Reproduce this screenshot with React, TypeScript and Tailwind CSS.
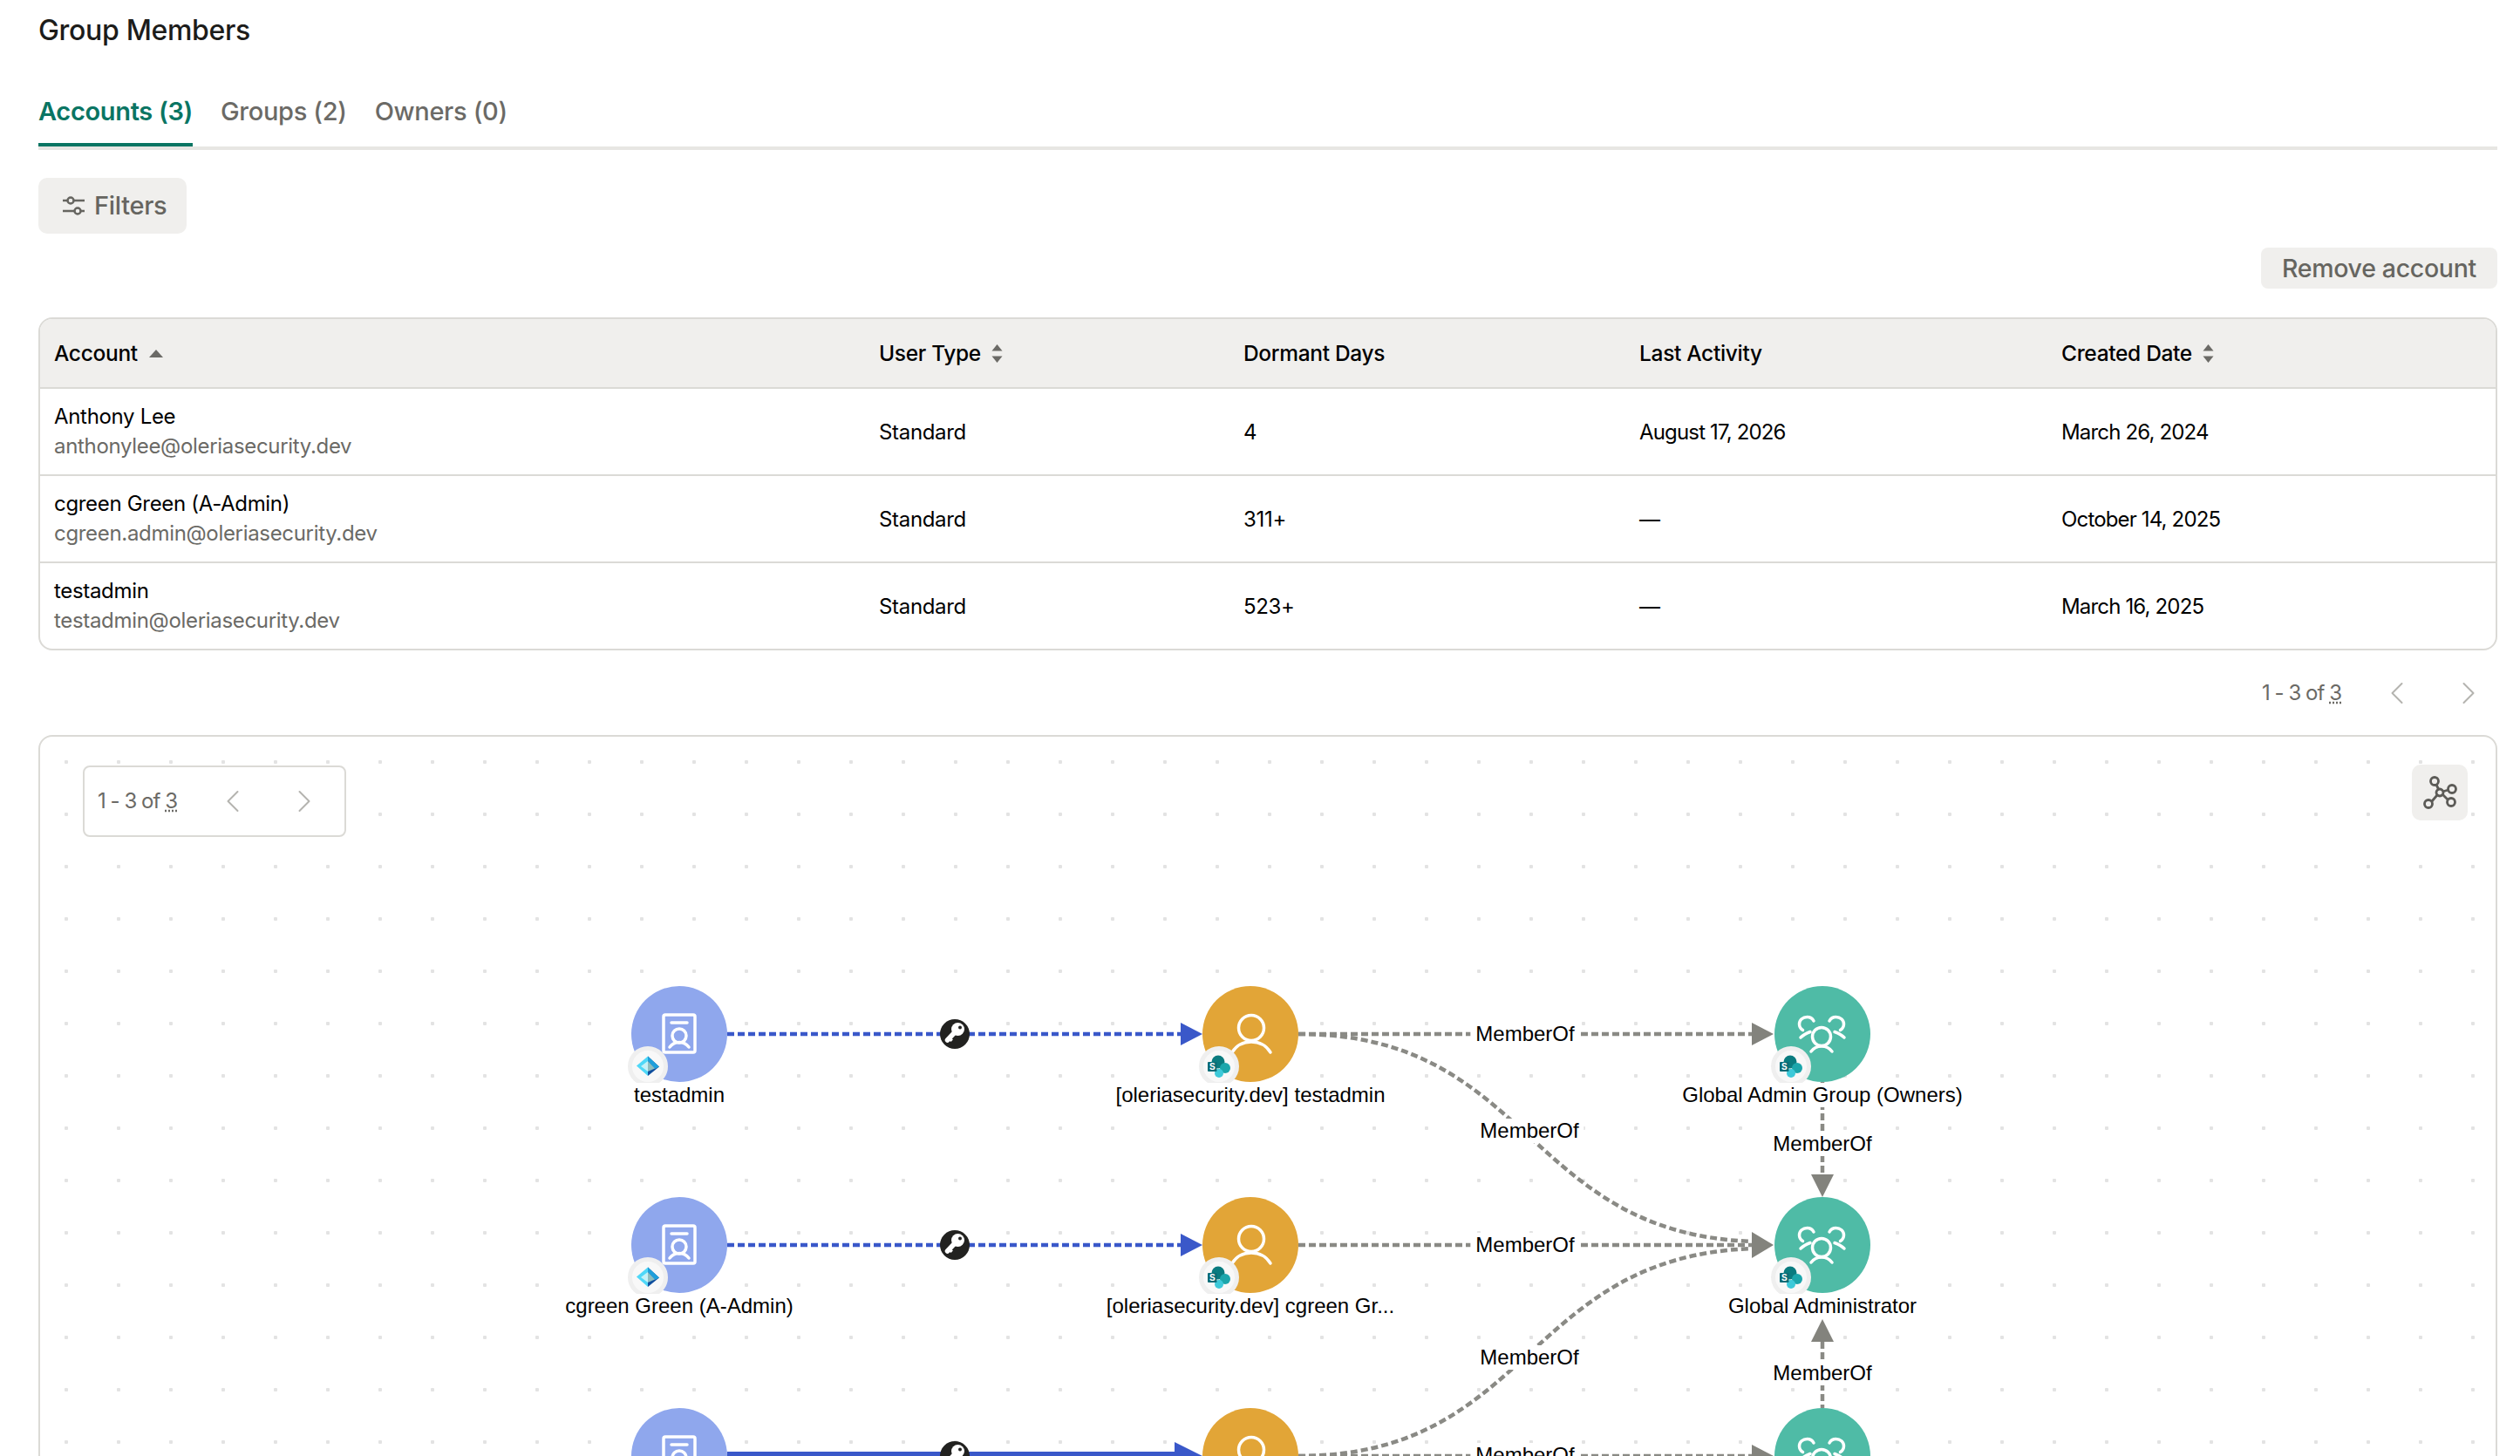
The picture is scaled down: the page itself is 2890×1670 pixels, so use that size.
import { ChevronLeft, ChevronRight } from 'lucide-react';

const columns = 'grid grid-cols-[946px_418px_454px_484px_1fr] items-center pl-[16px]';

const rows = [
  { name: 'Anthony Lee', email: 'anthonylee@oleriasecurity.dev', type: 'Standard', dormant: '4', activity: 'August 17, 2026', created: 'March 26, 2024' },
  { name: 'cgreen Green (A-Admin)', email: 'cgreen.admin@oleriasecurity.dev', type: 'Standard', dormant: '311+', activity: '—', created: 'October 14, 2025' },
  { name: 'testadmin', email: 'testadmin@oleriasecurity.dev', type: 'Standard', dormant: '523+', activity: '—', created: 'March 16, 2025' },
];

type NodeKind = 'account' | 'user' | 'group';

const nodes: { kind: NodeKind; x: number; y: number; label: string }[] = [
  { kind: 'account', x: 779, y: 1186, label: 'testadmin' },
  { kind: 'user', x: 1434, y: 1186, label: '[oleriasecurity.dev] testadmin' },
  { kind: 'group', x: 2090, y: 1186, label: 'Global Admin Group (Owners)' },
  { kind: 'account', x: 779, y: 1428, label: 'cgreen Green (A-Admin)' },
  { kind: 'user', x: 1434, y: 1428, label: '[oleriasecurity.dev] cgreen Gr...' },
  { kind: 'group', x: 2090, y: 1428, label: 'Global Administrator' },
  { kind: 'account', x: 779, y: 1670, label: '' },
  { kind: 'user', x: 1434, y: 1670, label: '' },
  { kind: 'group', x: 2090, y: 1670, label: '' },
];

const edgeLabels = [
  { x: 1749, y: 1186 },
  { x: 1754, y: 1297 },
  { x: 1749, y: 1428 },
  { x: 1754, y: 1557 },
  { x: 1749, y: 1669 },
  { x: 2090, y: 1312 },
  { x: 2090, y: 1575 },
];

// canvas origin, graph coords below are page coords
const ox = 46;
const oy = 845;

function SortIcon({ dir }: { dir: 'asc' | 'both' }) {
  if (dir === 'asc') {
    return (
      <svg width="16" height="9" viewBox="0 0 16 9" className="ml-[13px] text-[#6b6a66]" fill="currentColor">
        <path d="M8 0l8 9H0z" />
      </svg>
    );
  }
  return (
    <svg width="13" height="21" viewBox="0 0 13 21" className="ml-[12px] text-[#6b6a66]" fill="currentColor">
      <path d="M6.500 0l6 7.500H.5z" />
      <path d="M6.500 21l-6-7.500h12z" />
    </svg>
  );
}

function Pager() {
  return (
    <div className="flex items-center text-[24px] tracking-[-0.04em] text-[#6b6a66]">
      <span className="w-[133px]">
        1 - 3 of <span className="underline decoration-dotted">3</span>
      </span>
      <ChevronLeft size={44} strokeWidth={1.1} className="text-[#b4b3af]" />
      <ChevronRight size={44} strokeWidth={1.1} className="ml-[38px] text-[#b4b3af]" />
    </div>
  );
}

function NodeIcon({ kind }: { kind: NodeKind }) {
  if (kind === 'account') {
    return (
      <svg width="110" height="110" viewBox="0 0 110 110" fill="none" stroke="white" strokeWidth="3.5" strokeLinecap="round" strokeLinejoin="round">
        <rect x="37" y="33" width="36" height="43" rx="2" />
        <path d="M46 42h18" />
        <circle cx="55" cy="57" r="8" />
        <path d="M44 70c3-4 7-5.500 11-5.500s8 1.500 11 5.500" />
      </svg>
    );
  }
  if (kind === 'user') {
    return (
      <svg width="110" height="110" viewBox="0 0 110 110" fill="none" stroke="white" strokeWidth="3.5" strokeLinecap="round">
        <circle cx="56" cy="48" r="14.500" />
        <path d="M34 76c5-8 13-12 22-12s17 4 22 12" />
      </svg>
    );
  }
  return (
    <svg width="110" height="110" viewBox="0 0 110 110" fill="none" stroke="white" strokeWidth="3.500" strokeLinecap="round">
      <circle cx="54" cy="58" r="10.500" />
      <path d="M42 75c3-4 7-6 12-6s9 2 12 6" />
      <path d="M45 40c-1.500-3-4.500-4.500-7.500-4.500-5 0-9 3.500-9 8 0 3 1.500 5.500 4 7" />
      <path d="M30 59c3-3 7-5 11-6.500" />
      <path d="M63 40c1.500-3 4.500-4.500 7.500-4.500 5 0 9 3.500 9 8 0 3-1.500 5.500-4 7" />
      <path d="M80 59c-3-3-7-5-11-6.500" />
    </svg>
  );
}

function EntraLogo() {
  return (
    <svg width="28" height="24" viewBox="0 0 28 24">
      <path d="M14 .5L1 11.500L14 23z" fill="#4fd8f8" />
      <path d="M14 .5L27 12.500L14 23z" fill="#104f9e" />
      <path d="M14 .5L27 12.500L22 15L14 6z" fill="#1e9fdb" />
      <path d="M14 6L6 12L14 18z" fill="#c5f1f7" />
      <path d="M14 6L22 14.500L14 18z" fill="#8dbdbf" />
    </svg>
  );
}

function SharePointLogo() {
  return (
    <svg width="34" height="32" viewBox="0 0 34 32">
      <circle cx="16" cy="11" r="7.500" fill="#0a7b7f" />
      <circle cx="24" cy="18" r="6" fill="#1ca6ab" />
      <circle cx="17" cy="24" r="5" fill="#3dc9d9" />
      <rect x="4" y="11" width="10.500" height="11" rx="1" fill="#0a6c77" />
      <text x="9.200" y="20" textAnchor="middle" fontSize="10" fontWeight="700" fill="white" fontFamily="Liberation Sans, sans-serif">
        S
      </text>
    </svg>
  );
}

function GraphNode({ kind, x, y, label }: { kind: NodeKind; x: number; y: number; label: string }) {
  const fill = kind === 'account' ? 'bg-[#8fa7ed]' : kind === 'user' ? 'bg-[#e2a537]' : 'bg-[#4fbba6]';
  return (
    <div className="absolute h-[110px] w-[110px]" style={{ left: x - 55 - ox, top: y - 55 - oy }}>
      <div className={`h-[110px] w-[110px] rounded-full ${fill}`}>
        <NodeIcon kind={kind} />
      </div>
      <div className="absolute left-[-4px] top-[69px] flex h-[46px] w-[46px] items-center justify-center rounded-full border-[5px] border-[#efefef] bg-[#f8f8f8]">
        {kind === 'account' ? <EntraLogo /> : <SharePointLogo />}
      </div>
      {label && (
        <div className="absolute left-1/2 top-[111px] h-[28px] -translate-x-1/2 whitespace-nowrap bg-white text-[24px] leading-[28px] tracking-normal text-black font-['Liberation_Sans',Arial,sans-serif]">
          {label}
        </div>
      )}
    </div>
  );
}

function KeyNode({ y }: { y: number }) {
  return (
    <svg x={1095 - 17} y={y - 17} width="34" height="34" viewBox="0 0 34 34">
      <circle cx="17" cy="17" r="17" fill="#222220" />
      <circle cx="20.500" cy="11.500" r="7.500" fill="white" />
      <path d="M16.500 15.500L8.500 24" stroke="white" strokeWidth="5.500" strokeLinecap="round" />
      <path d="M11 24.500L13.500 22" stroke="white" strokeWidth="4" />
      <circle cx="23" cy="9.500" r="2" fill="#222220" />
    </svg>
  );
}

function GraphEdges() {
  const gray = '#8a8a85';
  const dash = { stroke: gray, strokeWidth: 4.5, strokeDasharray: '8 4', fill: 'none' };
  return (
    <svg className="absolute left-0 top-0" width="2816" height="825" viewBox="46 845 2816 825">
      <path d="M834 1186H1354" stroke="#3a58c9" strokeWidth="4.500" strokeDasharray="8 4" />
      <path d="M834 1428H1354" stroke="#3a58c9" strokeWidth="4.500" strokeDasharray="8 4" />
      <path d="M834 1670H1350" stroke="#3a58c9" strokeWidth="10" />
      <path d="M1354 1173L1379 1186L1354 1199Z" fill="#3a58c9" />
      <path d="M1354 1415L1379 1428L1354 1441Z" fill="#3a58c9" />
      <path d="M1347 1654L1379 1670L1347 1686Z" fill="#3a58c9" />
      <KeyNode y={1186} />
      <KeyNode y={1428} />
      <KeyNode y={1670} />

      <path d="M1489 1186H2009" {...dash} />
      <path d="M1489 1428H2009" {...dash} />
      <path d="M1489 1670H2009" {...dash} />
      <path d="M1489 1186C1756 1186 1748 1414 2009 1424" {...dash} />
      <path d="M1489 1670C1756 1670 1748 1442 2009 1432" {...dash} />
      <path d="M2090 1241V1347" {...dash} />
      <path d="M2090 1539V1615" {...dash} />

      <path d="M2009 1173L2034 1186L2009 1199Z" fill="#83837d" />
      <path d="M2009 1657L2034 1670L2009 1683Z" fill="#83837d" />
      <path d="M2009 1413L2034 1428L2009 1443Z" fill="#83837d" />
      <path d="M2077 1347H2103L2090 1373Z" fill="#83837d" />
      <path d="M2077 1539H2103L2090 1513Z" fill="#83837d" />
    </svg>
  );
}

export default function App() {
  return (
    <div className="h-[1670px] overflow-hidden bg-white pl-[44px] pr-[26px] text-[#1c1c1a] font-['Inter','Liberation_Sans',sans-serif] tracking-[-0.02em]">
      <h1 className="flex h-[72px] items-center pb-[2px] text-[32px] font-medium">Group Members</h1>

      <div className="flex h-[100px] gap-[32px] border-b-4 border-[#e7e6e3]">
        <button className="flex h-[96px] w-[177px] items-center whitespace-nowrap border-b-4 border-[#0a7563] pt-[20px] text-[29px] font-semibold text-[#0a7563]">
          Accounts (3)
        </button>
        <button className="flex h-[96px] items-center whitespace-nowrap pt-[16px] text-[29px] font-medium text-[#6b6a66]">
          Groups (2)
        </button>
        <button className="flex h-[96px] items-center whitespace-nowrap pt-[16px] text-[29px] font-medium text-[#6b6a66]">
          Owners (0)
        </button>
      </div>

      <button className="mt-[32px] flex h-[64px] w-[170px] items-center gap-[11px] rounded-[10px] bg-[#f0efed] pl-[28px] text-[29px] font-medium text-[#666560]">
        <svg width="25" height="22" viewBox="0 0 25 22" fill="none" stroke="currentColor" strokeWidth="2.500">
          <path d="M0 5h5M13 5h12M0 17h13M21 17h4" />
          <circle cx="9" cy="5" r="3.500" />
          <circle cx="17" cy="17" r="3.500" />
        </svg>
        Filters
      </button>

      <div className="mt-[16px] flex justify-end">
        <button className="flex h-[47px] w-[271px] items-center justify-center rounded-[8px] bg-[#f0efed] pt-[2px] text-[28.500px] font-medium text-[#666560]">
          Remove account
        </button>
      </div>

      <div className="mt-[33px] rounded-[16px] border-2 border-[#dbdad6]">
        <div className={`${columns} h-[80px] rounded-t-[14px] border-b-2 border-[#dbdad6] bg-[#f0efed] text-[24.500px] font-medium text-black`}>
          <div className="flex items-center">
            Account <SortIcon dir="asc" />
          </div>
          <div className="flex items-center">
            User Type <SortIcon dir="both" />
          </div>
          <div>Dormant Days</div>
          <div>Last Activity</div>
          <div className="flex items-center">
            Created Date <SortIcon dir="both" />
          </div>
        </div>
        {rows.map((row, i) => (
          <div
            key={row.email}
            className={`${columns} text-[24px] text-black ${i < rows.length - 1 ? 'h-[100px] border-b-2 border-[#dbdad6]' : 'h-[98px]'}`}
          >
            <div className="leading-[34px]">
              <div>{row.name}</div>
              <div className="text-[#6b6a66]">{row.email}</div>
            </div>
            <div className="pt-[2px]">{row.type}</div>
            <div className="pt-[2px]">{row.dormant}</div>
            <div className="pt-[2px] tracking-[-0.035em]">{row.activity}</div>
            <div className="pt-[2px] tracking-[-0.035em]">{row.created}</div>
          </div>
        ))}
      </div>

      <div className="flex h-[97px] items-center justify-end pr-[11px] pt-[1px]">
        <Pager />
      </div>

      <div className="relative h-[900px] rounded-[16px] border-2 border-[#dbdad6] bg-[radial-gradient(circle,#e3e3e3_2px,transparent_2.500px)] bg-[length:60px_60px] bg-[position:0px_-1px]">
        <GraphEdges />
        {nodes.map((n, i) => (
          <GraphNode key={i} {...n} />
        ))}
        {edgeLabels.map((l, i) => (
          <div
            key={i}
            className="absolute -translate-x-1/2 -translate-y-1/2 whitespace-nowrap bg-white px-[6px] text-[24px] leading-[28px] tracking-normal text-black font-['Liberation_Sans',Arial,sans-serif]"
            style={{ left: l.x - ox, top: l.y - oy }}
          >
            MemberOf
          </div>
        ))}

        <div className="absolute left-[49px] top-[33px] flex h-[82px] w-[302px] items-center rounded-[8px] border-2 border-[#dbdad6] bg-white pl-[15px]">
          <Pager />
        </div>

        <button className="absolute left-[2720px] top-[32px] flex h-[64px] w-[64px] items-center justify-center rounded-[10px] bg-[#f0efed] text-[#5c5b57]">
          <svg width="44" height="44" viewBox="-22 -22 44 44" fill="none" stroke="currentColor" strokeWidth="2.800">
            <path d="M-4 -9L-1 -3M3 -1L10 -3M3 2L9 8M-3 3L-9 10" />
            <circle cx="0" cy="0" r="4" />
            <circle cx="-6" cy="-13" r="4.500" />
            <circle cx="14" cy="-4" r="4.500" />
            <circle cx="13" cy="11" r="4.500" />
            <circle cx="-13" cy="13" r="4.500" />
          </svg>
        </button>
      </div>
    </div>
  );
}
